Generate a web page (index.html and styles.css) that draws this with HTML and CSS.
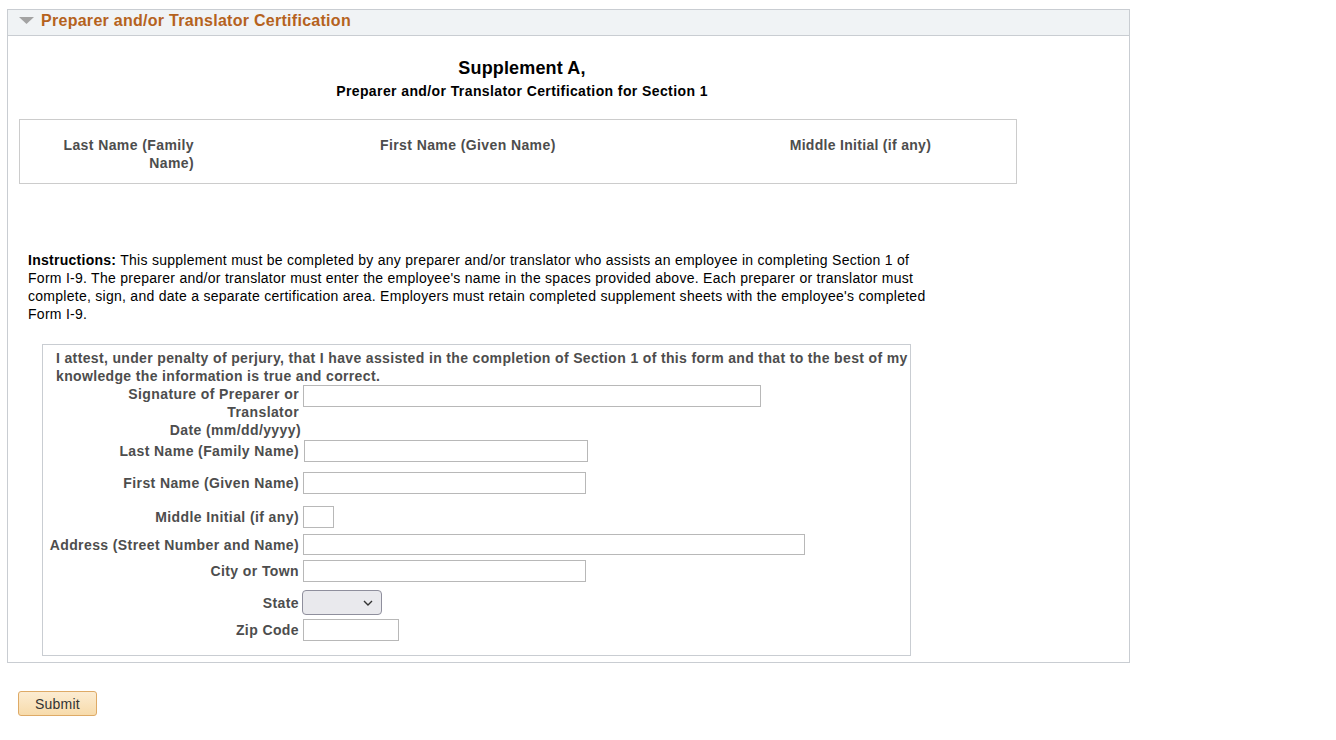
FILE: index.html
```html
<!DOCTYPE html>
<html lang="en">
<head>
<meta charset="utf-8">
<title>Preparer and/or Translator Certification</title>
<link rel="stylesheet" href="styles.css">
</head>
<body>
<div class="panel">
  <div class="panel-hdr">
    <svg class="tri" width="15" height="7" viewBox="0 0 15 7"><polygon points="0,0 15,0 7.5,7" fill="#a3a3a3"/></svg>
    <span class="panel-title">Preparer and/or Translator Certification</span>
  </div>
  <div class="panel-body">
    <div class="titles">
      <h1 class="h-main">Supplement A,</h1>
      <h2 class="h-sub">Preparer and/or Translator Certification for Section 1</h2>
    </div>
    <div class="names">
      <div class="nm nm-last">Last Name (Family Name)</div>
      <div class="nm nm-first">First Name (Given Name)</div>
      <div class="nm nm-mid">Middle Initial (if any)</div>
    </div>
    <p class="instr"><b>Instructions:</b> This supplement must be completed by any preparer and/or translator who assists an employee in completing Section 1 of Form I-9. The preparer and/or translator must enter the employee's name in the spaces provided above. Each preparer or translator must complete, sign, and date a separate certification area. Employers must retain completed supplement sheets with the employee's completed Form I-9.</p>
    <div class="attest">
      <p class="attest-text">I attest, under penalty of perjury, that I have assisted in the completion of Section 1 of this form and that to the best of my knowledge the information is true and correct.</p>
      <div class="row row-sig"><label class="lbl lbl-narrow">Signature of Preparer or Translator</label><input class="in w-sig" type="text"></div>
      <div class="row row-date"><label class="lbl lbl-date">Date (mm/dd/yyyy)</label></div>
      <div class="row row-last"><label class="lbl">Last Name (Family Name)</label><input class="in w-last" type="text"></div>
      <div class="row row-first"><label class="lbl">First Name (Given Name)</label><input class="in w-first" type="text"></div>
      <div class="row row-mid"><label class="lbl">Middle Initial (if any)</label><input class="in w-mid" type="text"></div>
      <div class="row row-addr"><label class="lbl">Address (Street Number and Name)</label><input class="in w-addr" type="text"></div>
      <div class="row row-city"><label class="lbl">City or Town</label><input class="in w-city" type="text"></div>
      <div class="row row-state"><label class="lbl">State</label>
        <span class="sel-wrap"><select class="sel"><option></option></select><svg class="chev" width="10" height="6" viewBox="0 0 10 6"><polyline points="1,1 5,5 9,1" fill="none" stroke="#333" stroke-width="1.4"/></svg></span>
      </div>
      <div class="row row-zip"><label class="lbl">Zip Code</label><input class="in w-zip" type="text"></div>
    </div>
  </div>
</div>
<button class="submit" type="button">Submit</button>
</body>
</html>
```
FILE: styles.css
```css
* { box-sizing: border-box; }
body {
  margin: 0;
  padding: 9px 7px;
  font-family: "Liberation Sans", Arial, sans-serif;
  font-size: 14px;
  line-height: 18px;
  color: #000;
  background: #fff;
}
.panel {
  width: 1123px;
  border: 1px solid #c9cdd2;
}
.panel-hdr {
  display: flex;
  align-items: center;
  height: 26px;
  padding: 1px 0 5px 11px;
  background: #f0f3f5;
  border-bottom: 1px solid #c9cdd2;
}
.tri { display: block; flex: none; margin-right: 7px; }
.panel-title {
  font-size: 16px;
  line-height: 20px;
  font-weight: bold;
  letter-spacing: 0.28px;
  color: #b5621d;
}
.panel-body {
  padding: 0 0 6px 0;
}
.titles {
  width: 1028px;
  text-align: center;
  padding-top: 21px;
}
.h-main {
  margin: 0;
  font-size: 18px;
  line-height: 22px;
  font-weight: bold;
  letter-spacing: 0.15px;
}
.h-sub {
  margin: 3px 0 0;
  font-size: 14px;
  line-height: 18px;
  font-weight: bold;
  letter-spacing: 0.4px;
}
.names {
  display: flex;
  align-items: flex-start;
  width: 998px;
  margin: 19px 0 0 11px;
  padding: 16px 0 11px;
  border: 1px solid #cccccc;
}
.nm {
  font-weight: bold;
  letter-spacing: 0.4px;
  color: #4d4d4d;
}
.nm-last { width: 174px; padding-left: 34px; text-align: right; }
.nm-first { margin-left: 186px; }
.nm-mid { margin-left: 234px; letter-spacing: 0.3px; }
.instr {
  width: 912px;
  margin: 67px 0 0 20px;
  letter-spacing: 0.27px;
}
.attest {
  width: 869px;
  margin: 21px 0 0 34px;
  padding: 4px 0 14px 0;
  border: 1px solid #c9cdd2;
}
.attest-text {
  margin: 0 -14px 0 13px;
  font-weight: bold;
  letter-spacing: 0.35px;
  color: #4d4d4d;
}
.row {
  display: flex;
  align-items: center;
}
.row-sig { align-items: flex-start; }
.row-last { margin-top: 1px; }
.row-first { margin-top: 10px; }
.row-mid { margin-top: 12px; }
.row-addr { margin-top: 6px; }
.row-city { margin-top: 5px; }
.row-state { margin-top: 8px; }
.row-zip { margin-top: 4px; }
.lbl {
  flex: none;
  width: 256px;
  margin-right: 4px;
  text-align: right;
  font-weight: bold;
  letter-spacing: 0.4px;
  color: #4d4d4d;
}
.lbl-narrow { padding-left: 80px; }
.lbl-date { margin-right: 2px; width: 258px; }
.in {
  display: block;
  height: 22px;
  margin: 0;
  padding: 0 3px;
  border: 1px solid #b8b8b8;
  border-radius: 0;
  background: #fff;
  font: 14px "Liberation Sans", Arial, sans-serif;
}
.w-sig { width: 458px; }
.w-last { width: 284px; margin-left: 1px; }
.w-first { width: 283px; }
.w-mid { width: 31px; }
.w-addr { width: 502px; height: 21px; }
.w-city { width: 283px; }
.w-zip { width: 96px; }
.sel-wrap {
  position: relative;
  display: block;
  margin-left: -1px;
}
.sel {
  display: block;
  width: 80px;
  height: 25px;
  margin: 0;
  appearance: none;
  -webkit-appearance: none;
  background: #e9e9ed;
  border: 1px solid #8f8f9d;
  border-radius: 4px;
  font: 14px "Liberation Sans", Arial, sans-serif;
}
.chev {
  position: absolute;
  right: 9px;
  top: 10px;
  pointer-events: none;
}
.submit {
  display: block;
  width: 79px;
  height: 25px;
  margin: 28px 0 0 11px;
  padding: 0;
  border: 1px solid #deaa66;
  border-radius: 3px;
  background: linear-gradient(#fcecd2, #f7dbab);
  color: #333;
  font: 14px "Liberation Sans", Arial, sans-serif;
  letter-spacing: 0.22px;
}
```
